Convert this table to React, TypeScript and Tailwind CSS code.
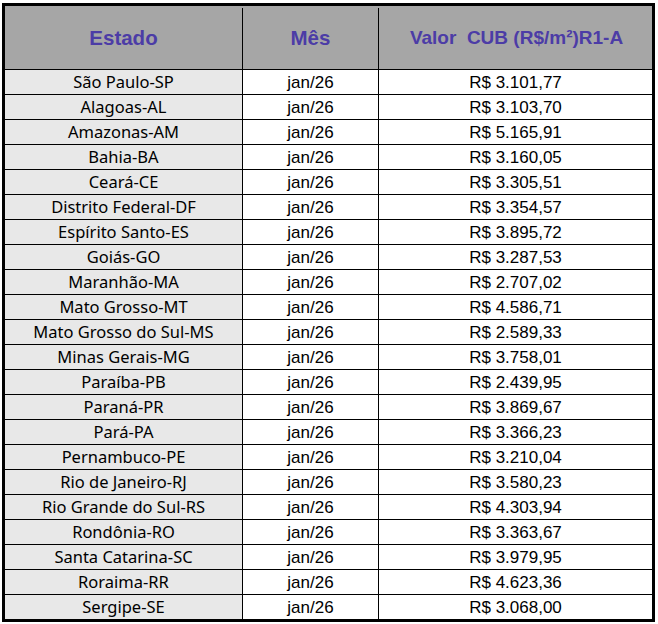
import React from "react";

interface Linha {
  estado: string;
  mes: string;
  valor: string;
}

const linhas: Linha[] = [
  { estado: "São Paulo-SP", mes: "jan/26", valor: "R$ 3.101,77" },
  { estado: "Alagoas-AL", mes: "jan/26", valor: "R$ 3.103,70" },
  { estado: "Amazonas-AM", mes: "jan/26", valor: "R$ 5.165,91" },
  { estado: "Bahia-BA", mes: "jan/26", valor: "R$ 3.160,05" },
  { estado: "Ceará-CE", mes: "jan/26", valor: "R$ 3.305,51" },
  { estado: "Distrito Federal-DF", mes: "jan/26", valor: "R$ 3.354,57" },
  { estado: "Espírito Santo-ES", mes: "jan/26", valor: "R$ 3.895,72" },
  { estado: "Goiás-GO", mes: "jan/26", valor: "R$ 3.287,53" },
  { estado: "Maranhão-MA", mes: "jan/26", valor: "R$ 2.707,02" },
  { estado: "Mato Grosso-MT", mes: "jan/26", valor: "R$ 4.586,71" },
  { estado: "Mato Grosso do Sul-MS", mes: "jan/26", valor: "R$ 2.589,33" },
  { estado: "Minas Gerais-MG", mes: "jan/26", valor: "R$ 3.758,01" },
  { estado: "Paraíba-PB", mes: "jan/26", valor: "R$ 2.439,95" },
  { estado: "Paraná-PR", mes: "jan/26", valor: "R$ 3.869,67" },
  { estado: "Pará-PA", mes: "jan/26", valor: "R$ 3.366,23" },
  { estado: "Pernambuco-PE", mes: "jan/26", valor: "R$ 3.210,04" },
  { estado: "Rio de Janeiro-RJ", mes: "jan/26", valor: "R$ 3.580,23" },
  { estado: "Rio Grande do Sul-RS", mes: "jan/26", valor: "R$ 4.303,94" },
  { estado: "Rondônia-RO", mes: "jan/26", valor: "R$ 3.363,67" },
  { estado: "Santa Catarina-SC", mes: "jan/26", valor: "R$ 3.979,95" },
  { estado: "Roraima-RR", mes: "jan/26", valor: "R$ 4.623,36" },
  { estado: "Sergipe-SE", mes: "jan/26", valor: "R$ 3.068,00" },
];

const App = () => {
  return (
    <div className="w-[658px] h-[624px] bg-white pt-[3px] pl-[2px]">
      <div className="w-[653px] border-[3px] border-black">
        {/* cabeçalho */}
        <div className="flex h-[64px] bg-[#a6a6a6] border-b border-black font-['Liberation_Sans',Arial,sans-serif] font-bold text-[20.5px] text-[#4c3ca6] pt-[2px]">
          <div className="w-[238px] border-r border-black flex items-center justify-center">
            Estado
          </div>
          <div className="w-[136px] border-r border-black flex items-center justify-center">
            Mês
          </div>
          <div className="flex-1 flex items-center justify-center whitespace-pre text-[19px] pl-[2px]">
            Valor  CUB (R$/m²)R1-A
          </div>
        </div>

        {linhas.map((linha, index) => (
          <div
            key={linha.estado}
            className={`flex ${
              index < linhas.length - 1 ? "h-[25px] border-b border-black" : "h-[24px]"
            }`}
          >
            <div className="w-[238px] bg-[#e8e8e8] border-r border-black flex items-center justify-center pt-[1px] font-['Noto_Sans',sans-serif] text-[16.5px] text-black">
              {linha.estado}
            </div>
            <div className="w-[136px] border-r border-black flex items-center justify-center pt-[1px] font-['Liberation_Sans',Arial,sans-serif] text-[17px] text-black">
              {linha.mes}
            </div>
            <div className="flex-1 flex items-center justify-center pt-[1px] font-['Liberation_Sans',Arial,sans-serif] text-[17px] text-black">
              {linha.valor}
            </div>
          </div>
        ))}
      </div>
    </div>
  );
};

export default App;
